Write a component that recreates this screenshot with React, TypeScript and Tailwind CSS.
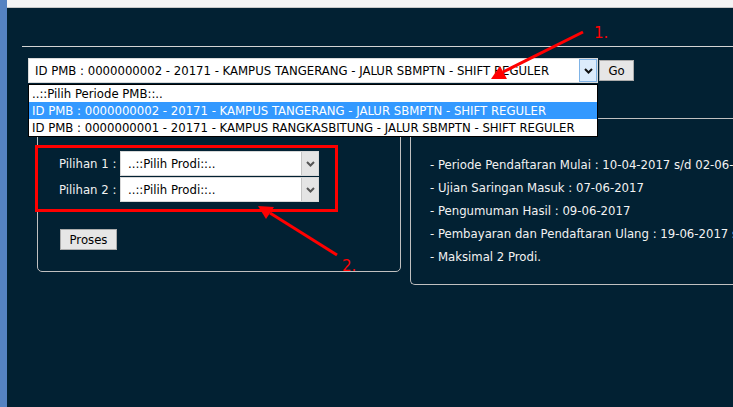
import React from "react";

const font = { fontFamily: '"DejaVu Sans Condensed", "DejaVu Sans", Tahoma, sans-serif' };

const periods = [
  "..::Pilih Periode PMB::..",
  "ID PMB : 0000000002 - 20171 - KAMPUS TANGERANG - JALUR SBMPTN - SHIFT REGULER",
  "ID PMB : 0000000001 - 20171 - KAMPUS RANGKASBITUNG - JALUR SBMPTN - SHIFT REGULER",
];

const schedule = [
  "- Periode Pendaftaran Mulai : 10-04-2017 s/d 02-06-2017",
  "- Ujian Saringan Masuk : 07-06-2017",
  "- Pengumuman Hasil : 09-06-2017",
  "- Pembayaran dan Pendaftaran Ulang : 19-06-2017 s/d 23-06-2017",
  "- Maksimal 2 Prodi.",
];

const Chevron = ({ color }: { color: string }) => (
  <svg width="9" height="6" viewBox="0 0 9 6">
    <path d="M1 1 L4.5 4.5 L8 1" fill="none" stroke={color} strokeWidth="2" />
  </svg>
);

const ProdiSelect = () => (
  <div className="flex h-[25px] w-[199px] bg-white border border-[#d8d8d8]">
    <div className="flex-1 pl-[7px] flex items-center text-[13px] text-black">..::Pilih Prodi::..</div>
    <div className="w-[17px] flex items-center justify-center bg-[#e4e4e4] border-l border-[#c4c4c4]">
      <Chevron color="#555" />
    </div>
  </div>
);

export default function App() {
  return (
    <div className="relative w-[733px] h-[407px] flex overflow-hidden bg-[#022133]" style={font}>
      <div className="w-[7px] shrink-0 bg-[#5583c2]" />
      <div className="flex-1 min-w-0 flex flex-col">
        <div className="h-[8px] bg-[#f4f4f4] border-b border-[#c8c8c8]" />

        <div className="mt-[38px] ml-[15px] border-t border-[#d4d4d4]" />

        {/* period picker */}
        <div className="relative mt-[11px] ml-[21px] flex items-start">
          <div className="flex h-[25px] w-[570px] shrink-0 bg-white border border-[#dadada]">
            <div className="flex-1 pl-[6px] flex items-center text-[13px] text-black whitespace-nowrap overflow-hidden">{periods[1]}</div>
            <div className="w-[18px] flex items-center justify-center bg-[#dcebfb] border border-[#7fb3e6]">
              <Chevron color="#111" />
            </div>
          </div>
          <button className="ml-[1px] mt-[2px] h-[21px] w-[35px] shrink-0 bg-[#e6e6e6] border border-[#acacac] text-[13px] text-black">Go</button>

          <div className="absolute left-0 top-[26px] w-[570px] bg-white border border-black z-10">
            {periods.map((p, i) => (
              <div
                key={i}
                className={
                  i === 1
                    ? "h-[17px] pl-[3px] flex items-center text-[13px] whitespace-nowrap bg-[#3399ff] text-white"
                    : "h-[17px] pl-[3px] flex items-center text-[13px] whitespace-nowrap text-black"
                }
              >
                {p}
              </div>
            ))}
          </div>
        </div>

        <div className="mt-[35px] flex">
          {/* prodi choice */}
          <div className="ml-[30px] w-[364px] shrink-0 h-[154px] border border-[#c0c0c0] rounded-[5px] pl-[21px] pt-[32px] text-[13px] text-[#f2f2f2]">
            <div className="flex items-center gap-[6px]">
              <span className="w-[55px] whitespace-nowrap">Pilihan 1 :</span>
              <ProdiSelect />
            </div>
            <div className="mt-[1px] flex items-center gap-[6px]">
              <span className="w-[55px] whitespace-nowrap">Pilihan 2 :</span>
              <ProdiSelect />
            </div>
            <button className="mt-[27px] ml-[1px] h-[21px] w-[57px] bg-[#e6e6e6] border border-[#acacac] text-[13px] text-black">Proses</button>
          </div>

          {/* schedule */}
          <div className="ml-[9px] flex-1 h-[167px] border border-[#c0c0c0] border-r-0 rounded-l-[5px] pl-[19px] pt-[36px] text-[13px] text-[#f2f2f2] whitespace-nowrap overflow-hidden">
            {schedule.map((s, i) => (
              <div key={i} className="h-[23px]">{s}</div>
            ))}
          </div>
        </div>
      </div>

      {/* highlight box */}
      <div className="absolute left-[35px] top-[145px] w-[303px] h-[67px] border-[3px] border-[#ff0000]" />

      {/* pointers */}
      <svg className="absolute left-0 top-0 pointer-events-none" width="733" height="407">
        <line x1="583" y1="32" x2="503" y2="72" stroke="#ff0000" strokeWidth="3" />
        <polygon points="491,79 500,66 507,79" fill="#ff0000" />
        <line x1="337" y1="255" x2="270" y2="213" stroke="#ff0000" strokeWidth="3" />
        <polygon points="258,206 274,207 266,219" fill="#ff0000" />
        <text x="594" y="38" fill="#ff0000" fontSize="15" fontFamily="DejaVu Sans, sans-serif">1.</text>
        <text x="342" y="271" fill="#ff0000" fontSize="15" fontFamily="DejaVu Sans, sans-serif">2.</text>
      </svg>
    </div>
  );
}
